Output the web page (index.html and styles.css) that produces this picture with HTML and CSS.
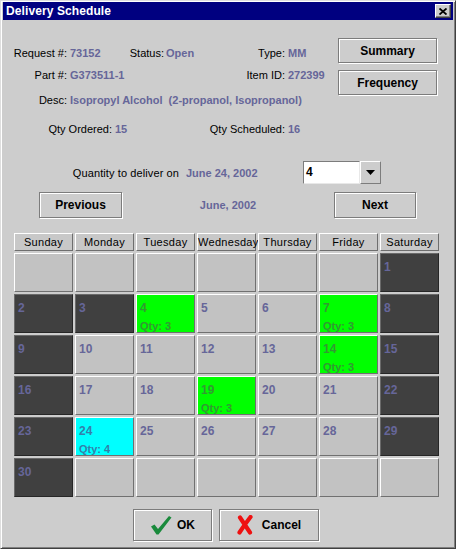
FILE: index.html
```html
<!DOCTYPE html>
<html>
<head>
<meta charset="utf-8">
<title>Delivery Schedule</title>
<link rel="stylesheet" href="styles.css">
</head>
<body>
<div class="window">
  <div class="titlebar">
    <span class="title">Delivery Schedule</span>
    <span class="close">
      <svg width="8" height="7" viewBox="0 0 8 7"><path d="M0.5 0.5 L7.5 6.5 M7.5 0.5 L0.5 6.5" stroke="#000" stroke-width="1.8" fill="none"/></svg>
    </span>
  </div>

  <div class="top">
    <div class="info">
      <span class="lbl c1">Request #:</span><span class="val c2">73152</span>
      <span class="lbl c3">Status:</span><span class="val c4">Open</span>
      <span class="lbl c5">Type:</span><span class="val c6">MM</span>

      <span class="lbl c1">Part #:</span><span class="val c2">G373511-1</span>
      <span class="c3"></span><span class="c4"></span>
      <span class="lbl c5">Item ID:</span><span class="val c6">272399</span>

      <span class="lbl c1">Desc:</span><span class="val desc">Isopropyl Alcohol&nbsp; (2-propanol, Isopropanol)</span>
    </div>
    <div class="side">
      <button class="btn side-btn">Summary</button>
      <button class="btn side-btn">Frequency</button>
    </div>
  </div>

  <div class="qty-row">
    <span class="lbl q1">Qty Ordered:</span><span class="val q2">15</span>
    <span class="lbl q3">Qty Scheduled:</span><span class="val q4">16</span>
  </div>

  <div class="deliver-row">
    <span class="lbl d1">Quantity to deliver on</span>
    <span class="val d2">June 24, 2002</span>
    <div class="combo">
      <span class="combo-field">4</span>
      <span class="combo-arrow"><svg width="9" height="5" viewBox="0 0 9 5"><path d="M0 0 H9 L4.5 5 Z" fill="#000"/></svg></span>
    </div>
  </div>

  <div class="nav-row">
    <button class="btn nav-prev">Previous</button>
    <span class="val month">June, 2002</span>
    <button class="btn nav-next">Next</button>
  </div>

  <div class="calendar">
    <div class="head">Sunday</div>
    <div class="head">Monday</div>
    <div class="head">Tuesday</div>
    <div class="head">Wednesday</div>
    <div class="head">Thursday</div>
    <div class="head">Friday</div>
    <div class="head">Saturday</div>

    <div class="cell"></div>
    <div class="cell"></div>
    <div class="cell"></div>
    <div class="cell"></div>
    <div class="cell"></div>
    <div class="cell"></div>
    <div class="cell dark"><span class="num">1</span></div>

    <div class="cell dark"><span class="num">2</span></div>
    <div class="cell dark"><span class="num">3</span></div>
    <div class="cell green"><span class="num">4</span><span class="qty">Qty: 3</span></div>
    <div class="cell"><span class="num">5</span></div>
    <div class="cell"><span class="num">6</span></div>
    <div class="cell green"><span class="num">7</span><span class="qty">Qty: 3</span></div>
    <div class="cell dark"><span class="num">8</span></div>

    <div class="cell dark"><span class="num">9</span></div>
    <div class="cell"><span class="num">10</span></div>
    <div class="cell"><span class="num">11</span></div>
    <div class="cell"><span class="num">12</span></div>
    <div class="cell"><span class="num">13</span></div>
    <div class="cell green"><span class="num">14</span><span class="qty">Qty: 3</span></div>
    <div class="cell dark"><span class="num">15</span></div>

    <div class="cell dark"><span class="num">16</span></div>
    <div class="cell"><span class="num">17</span></div>
    <div class="cell"><span class="num">18</span></div>
    <div class="cell green"><span class="num">19</span><span class="qty">Qty: 3</span></div>
    <div class="cell"><span class="num">20</span></div>
    <div class="cell"><span class="num">21</span></div>
    <div class="cell dark"><span class="num">22</span></div>

    <div class="cell dark"><span class="num">23</span></div>
    <div class="cell cyan"><span class="num">24</span><span class="qty">Qty: 4</span></div>
    <div class="cell"><span class="num">25</span></div>
    <div class="cell"><span class="num">26</span></div>
    <div class="cell"><span class="num">27</span></div>
    <div class="cell"><span class="num">28</span></div>
    <div class="cell dark"><span class="num">29</span></div>

    <div class="cell dark"><span class="num">30</span></div>
    <div class="cell"></div>
    <div class="cell"></div>
    <div class="cell"></div>
    <div class="cell"></div>
    <div class="cell"></div>
    <div class="cell"></div>
  </div>

  <div class="bottom">
    <button class="btn action ok">
      <svg width="22" height="20" viewBox="0 0 22 20"><path d="M1 11.5 L4.5 9.5 L8 14 L19 1 L21.5 2.5 L8.5 19.5 L6.5 19.5 Z" fill="#1a8a3c"/></svg>
      <span>OK</span>
    </button>
    <button class="btn action cancel">
      <svg width="16" height="20" viewBox="0 0 16 20"><path d="M3 2.5 Q8 10 13 17.5 M13.5 2 Q8 9 2.5 17.5" stroke="#ee1111" stroke-width="4.2" stroke-linecap="round" fill="none"/></svg>
      <span>Cancel</span>
    </button>
  </div>
</div>
</body>
</html>
```

FILE: styles.css
```css
html, body {
  margin: 0;
  padding: 0;
  background: #cdcdcd;
}

.window {
  width: 456px;
  height: 549px;
  box-sizing: border-box;
  background: #cdcdcd;
  border: 1px solid;
  border-color: #dedede #404040 #404040 #dedede;
  box-shadow: inset 1px 1px 0 #ffffff, inset -1px -1px 0 #808080;
  padding: 1px 2px 2px 2px;
  display: flex;
  flex-direction: column;
  font-family: "Liberation Sans", Arial, sans-serif;
  font-size: 11px;
  color: #000;
}

.titlebar {
  height: 18px;
  background: #000080;
  display: flex;
  align-items: center;
  justify-content: space-between;
  padding-left: 3px;
  padding-right: 2px;
  flex-shrink: 0;
}

.title {
  color: #fff;
  font-weight: bold;
  font-size: 12px;
  letter-spacing: 0.1px;
}

.close {
  width: 16px;
  height: 14px;
  box-sizing: border-box;
  background: #cdcdcd;
  border: 1px solid;
  border-color: #ffffff #404040 #404040 #ffffff;
  box-shadow: inset -1px -1px 0 #808080;
  display: flex;
  align-items: center;
  justify-content: center;
}

.lbl {
  color: #000;
  white-space: nowrap;
}

.val {
  color: #666699;
  font-weight: bold;
  white-space: nowrap;
}

/* top section */
.top {
  display: flex;
  padding-top: 18px;
}

.info {
  width: 335px;
  padding-top: 8px;
  padding-left: 5px;
  box-sizing: border-box;
  display: grid;
  grid-template-columns: 59px 57px 40px 66px 55px 50px;
  grid-template-rows: 14px 14px 14px;
  row-gap: 8px;
  line-height: 14px;
}
.info > :nth-child(n+13) {
  margin-top: 3px;
}

.c1, .c3, .c5 { text-align: right; }
.c2 { padding-left: 3px; }
.c4 { padding-left: 2px; }
.c6 { padding-left: 3px; }
.desc {
  grid-column: 2 / 7;
  padding-left: 3px;
}

.side {
  display: flex;
  flex-direction: column;
  gap: 7px;
}

.btn {
  font-family: "Liberation Sans", Arial, sans-serif;
  font-weight: bold;
  font-size: 12px;
  color: #000;
  background: #cdcdcd;
  border: 1px solid #7c7c7c;
  box-shadow: inset 1px 1px 0 #ffffff, 1px 1px 0 #ffffff;
  padding: 0;
  margin: 0;
  box-sizing: border-box;
}

.side-btn {
  width: 99px;
  height: 25px;
}

/* qty row */
.qty-row {
  display: flex;
  margin-top: 18px;
  height: 14px;
  line-height: 14px;
}
.q1 { width: 109px; text-align: right; }
.q2 { width: 85px; padding-left: 3px; }
.q3 { width: 85px; text-align: right; }
.q4 { padding-left: 3px; }

/* deliver row */
.deliver-row {
  display: flex;
  align-items: center;
  margin-top: 25px;
  height: 23px;
}
.d1 { width: 176px; text-align: right; letter-spacing: 0.1px; }
.d2 { width: 117px; padding-left: 7px; }

.combo {
  display: flex;
  height: 23px;
}
.combo-field {
  width: 57px;
  box-sizing: border-box;
  background: #fff;
  border: 1px solid;
  border-color: #7c7c7c #e8e8e8 #e8e8e8 #7c7c7c;
  font-weight: bold;
  font-size: 12px;
  line-height: 21px;
  padding-left: 2px;
}
.combo-arrow {
  width: 21px;
  box-sizing: border-box;
  background: #cdcdcd;
  border: 1px solid;
  border-color: #ffffff #7c7c7c #7c7c7c #ffffff;
  display: flex;
  align-items: center;
  justify-content: center;
}

/* nav row */
.nav-row {
  display: flex;
  align-items: center;
  margin-top: 8px;
  height: 26px;
}
.nav-prev {
  width: 83px;
  height: 26px;
  margin-left: 36px;
}
.month {
  flex: 1;
  text-align: center;
}
.nav-next {
  width: 82px;
  height: 26px;
  margin-right: 37px;
}

/* calendar */
.calendar {
  margin-top: 15px;
  margin-left: 11px;
  display: grid;
  grid-template-columns: repeat(7, 59px);
  grid-template-rows: 18px repeat(6, 39px);
  column-gap: 2px;
  row-gap: 2px;
}

.head {
  box-sizing: border-box;
  background: #c8c8c8;
  border: 1px solid;
  border-color: #ffffff #6e6e6e #6e6e6e #ffffff;
  text-align: center;
  line-height: 16px;
  font-size: 11px;
  letter-spacing: 0.3px;
}

.cell {
  box-sizing: border-box;
  background: #c2c2c2;
  border: 1px solid;
  border-color: #ffffff #707070 #707070 #ffffff;
  padding: 6px 2px 0 3px;
  display: flex;
  flex-direction: column;
  align-items: flex-start;
}

.cell.dark {
  background: #404040;
  border-color: #6a6a6a #262626 #262626 #6a6a6a;
}
.cell.green {
  background: #00ff00;
}
.cell.cyan {
  background: #00ffff;
}

.num {
  font-weight: bold;
  font-size: 12px;
  line-height: 14px;
  color: #666699;
}
.cell.green .num, .cell.green .qty { color: #339933; }
.cell.cyan .num, .cell.cyan .qty { color: #3380aa; }

.qty {
  font-weight: bold;
  font-size: 11px;
  line-height: 14px;
  margin-top: 4px;
}

/* bottom buttons */
.bottom {
  display: flex;
  margin-top: 12px;
  padding-left: 130px;
  gap: 7px;
}
.action {
  height: 32px;
  display: flex;
  align-items: center;
  justify-content: center;
  gap: 5px;
  font-size: 12px;
}
.ok { width: 79px; }
.cancel { width: 100px; gap: 9px; }
```
